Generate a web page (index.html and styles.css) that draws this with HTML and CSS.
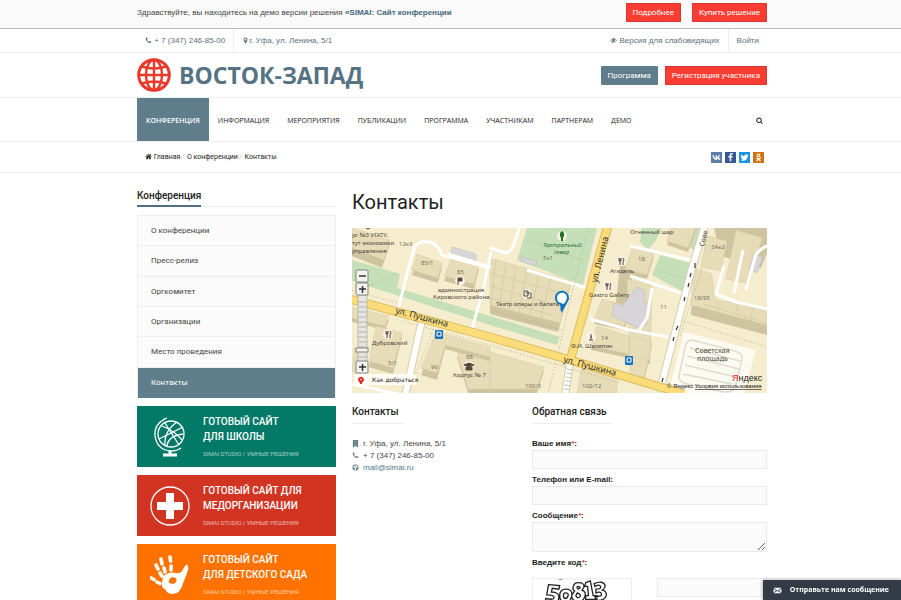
FILE: index.html
```html
<!DOCTYPE html>
<html lang="ru">

	<head>
		<meta charset="UTF-8">
		<title>Контакты</title>
		<link rel="stylesheet" href="styles.css">
	</head>

	<body>
		<!-- иконки -->
		<svg class="sprite" aria-hidden="true">
			<symbol id="i-phone" viewBox="0 0 1792 1792"><path d="M1600 1240q0 27-10 70.5t-21 68.5q-21 50-122 106-94 51-186 51-27 0-53-3.5t-57.5-12.5-47-14.5-55.5-20.5-49-18q-98-35-175-83-127-79-264-216t-216-264q-48-77-83-175-3-9-18-49t-20.5-55.5-14.5-47-12.5-57.5-3.5-53q0-92 51-186 56-101 106-122 25-11 68.5-21t70.5-10q14 0 21 3 18 6 53 76 11 19 30 54t35 63.5 31 53.5q3 4 17.5 25t21.5 35.5 7 28.5q0 20-28.5 50t-62 55-62 53-28.5 46q0 9 5 22.5t8.5 20.5 14 24 11.5 19q76 137 174 235t235 174q2 1 19 11.5t24 14 20.5 8.5 22.5 5q18 0 46-28.5t53-62 55-62 50-28.5q14 0 28.5 7t35.5 21.5 25 17.5q25 15 53.5 31t63.5 35 54 30q70 35 76 53 3 7 3 21z"/></symbol>
			<symbol id="i-marker" viewBox="0 0 1792 1792"><path d="M1152 640q0-106-75-181t-181-75-181 75-75 181 75 181 181 75 181-75 75-181zm256 0q0 109-33 179l-364 774q-16 33-47.5 52t-67.5 19-67.5-19-46.5-52l-365-774q-33-70-33-179 0-212 150-362t362-150 362 150 150 362z"/></symbol>
			<symbol id="i-search" viewBox="0 0 1792 1792"><path d="M1216 832q0-185-131.5-316.5t-316.5-131.5-316.5 131.5-131.5 316.5 131.5 316.5 316.5 131.5 316.5-131.5 131.5-316.5zm512 832q0 52-38 90t-90 38q-54 0-90-38l-343-342q-179 124-399 124-143 0-273.5-55.5t-225-150-150-225-55.5-273.5 55.5-273.5 150-225 225-150 273.5-55.5 273.5 55.5 225 150 150 225 55.5 273.5q0 220-124 399l343 343q37 37 37 90z"/></symbol>
			<symbol id="i-twitter" viewBox="0 0 1792 1792"><path d="M1684 408q-67 98-162 167 1 14 1 42 0 130-38 259.5t-115.5 248.5-184.5 210.5-258 146-323 54.5q-271 0-496-145 35 4 78 4 225 0 401-138-105-2-188-64.5t-114-159.5q33 5 61 5 43 0 85-11-112-23-185.5-111.5t-73.5-205.5v-4q68 38 146 41-66-44-105-115t-39-154q0-88 44-163 121 149 294.5 238.5t371.5 99.5q-8-38-8-74 0-134 94.5-228.5t228.5-94.5q140 0 236 102 109-21 205-78-37 115-142 178 93-10 186-50z"/></symbol>
			<symbol id="i-facebook" viewBox="0 0 1792 1792"><path d="M1343 12v264h-157q-86 0-116 36t-30 108v189h293l-39 296h-254v759h-306v-759h-255v-296h255v-218q0-186 104-288.5t277-102.5q147 0 228 12z"/></symbol>
			<symbol id="i-home" viewBox="0 0 16 16"><path d="M8 1.500.500 8l1 1L8 3.500 14.500 9l1-1-2.500-2.200V2h-2v2zM8 4.800 3 9v5h4v-4h2v4h4V9z"/></symbol>
			<symbol id="i-building" viewBox="0 0 16 16"><path fill-rule="evenodd" d="M2 0h12v16h-4v-3H6v3H2zM5 3v1h1V3zm2.500 0v1h1V3zm2.500 0v1h1V3zM5 6v1h1V6zm2.500 0v1h1V6zm2.500 0v1h1V6zM5 9v1h1V9zm2.500 0v1h1V9zm2.500 0v1h1V9z"/></symbol>
			<symbol id="i-globe" viewBox="0 0 16 16"><path fill-rule="evenodd" d="M8 1a7 7 0 1 0 0 14A7 7 0 0 0 8 1zM9 3l3 1 1 3-2 2-3-2-1 2 3 1-1 3-2 1-1-4-3-3 2-3 3 1z"/></symbol>
			<symbol id="i-eye" viewBox="0 0 16 16"><path d="M1 8q3-4.500 7-4.500T15 8q-3 4.500-7 4.500T1 8z" fill="none" stroke="currentColor" stroke-width="1.500"/><circle cx="8" cy="7.500" r="3"/><path d="M5 14 11 2" stroke="currentColor" stroke-width="1.500"/></symbol>
			<symbol id="i-vk" viewBox="0 0 16 16"><path d="M8.500 12.500C3.800 12.500 1.300 9.400.800 4h2.600c.200 3.200 1.600 5.200 3 5.600V4h2.400v3.300c1.400-.200 2.600-1.700 3-3.300h2.500c-.400 1.900-1.600 3.300-2.700 4 1.100.600 2.500 1.900 3.300 4.500h-2.700c-.500-1.500-1.800-2.700-3.400-2.900v2.900z"/></symbol>
			<symbol id="i-ok" viewBox="0 0 16 16"><g fill="none" stroke="currentColor" stroke-width="2" stroke-linecap="round"><circle cx="8" cy="4.200" r="2.400"/><path d="M4.500 8.800q3.500 2.400 7 0M8 10.500 5 14M8 10.500l3 3.500"/></g></symbol>
			<symbol id="i-mail" viewBox="0 0 16 16"><path d="M1 3h14L8 8.500zM1 4.800l4.300 3.400L1 12zM15 4.800l-4.300 3.400L15 12zM1.500 13l5-4.200L8 10l1.500-1.200 5 4.200z"/></symbol>
		</svg>

		<div class="demo">
			<div class="container demo-row">
				<p>Здравствуйте, вы находитесь на демо версии решения <a href="#">«SIMAI: Сайт конференции</a></p>
				<div class="demo-btns">
					<button class="btn btn-red" type="button">Подробнее</button>
					<button class="btn btn-red" type="button">Купить решение</button>
				</div>
			</div>
		</div>

		<div class="topbar">
			<div class="container topbar-row">
				<a href="#"><svg class="icon"><use href="#i-phone"/></svg> + 7 (347) 246-85-00</a>
				<a href="#"><svg class="icon"><use href="#i-marker"/></svg>г. Уфа, ул. Ленина, 5/1</a>
				<a class="to-right" href="#"><svg class="icon"><use href="#i-eye"/></svg> Версия для слабовидящих</a>
				<a href="#">Войти</a>
			</div>
		</div>

		<header class="header">
			<div class="container header-row">
				<a class="logo" href="#">
					<svg class="logo-pic" viewBox="0 0 34 34" fill="none" stroke="#e8392b" stroke-width="2.400">
						<circle cx="17" cy="17" r="15.300" stroke-width="3"/>
						<ellipse cx="17" cy="17" rx="8" ry="15"/>
						<path d="M17 2v30M2 17h30M5 8.500q12 4 24 0M5 25.500q12-4 24 0"/>
					</svg>
					<span>ВОСТОК-ЗАПАД</span>
				</a>
				<div class="header-btns">
					<button class="btn" type="button">Программа</button>
					<button class="btn btn-red" type="button">Регистрация участника</button>
				</div>
			</div>
		</header>

		<nav class="nav">
			<div class="container nav-row">
				<a class="active" href="#">КОНФЕРЕНЦИЯ</a>
				<a href="#">ИНФОРМАЦИЯ</a>
				<a href="#">МЕРОПРИЯТИЯ</a>
				<a href="#">ПУБЛИКАЦИИ</a>
				<a href="#">ПРОГРАММА</a>
				<a href="#">УЧАСТНИКАМ</a>
				<a href="#">ПАРТНЕРАМ</a>
				<a href="#">ДЕМО</a>
				<button class="search" type="button" aria-label="Поиск"><svg class="icon"><use href="#i-search"/></svg></button>
			</div>
		</nav>

		<div class="crumbs">
			<div class="container crumbs-row">
				<div class="crumbs-list">
					<a href="#"><svg class="icon"><use href="#i-home"/></svg> Главная</a><i>/</i>
					<a href="#">О конференции</a><i>/</i>
					<a href="#">Контакты</a>
				</div>
				<div class="social">
					<a class="vk" href="#" aria-label="ВКонтакте"><svg><use href="#i-vk"/></svg></a>
					<a class="fb" href="#" aria-label="Facebook"><svg><use href="#i-facebook"/></svg></a>
					<a class="tw" href="#" aria-label="Twitter"><svg><use href="#i-twitter"/></svg></a>
					<a class="ok" href="#" aria-label="Одноклассники"><svg><use href="#i-ok"/></svg></a>
				</div>
			</div>
		</div>

		<div class="container main">
			<aside class="side">
				<div class="side-title"><h2>Конференция</h2></div>
				<ul class="side-menu">
					<li><a href="#">О конференции</a></li>
					<li><a href="#">Пресс-релиз</a></li>
					<li><a href="#">Оргкомитет</a></li>
					<li><a href="#">Организации</a></li>
					<li><a href="#">Место проведения</a></li>
					<li class="active"><a href="#">Контакты</a></li>
				</ul>

				<a class="banner green" href="#">
					<svg viewBox="0 0 40 40" fill="none" stroke="#fff" stroke-width="1.300">
						<circle cx="21" cy="17" r="13"/>
						<path d="M15 2Q4 7 5 19q2 14 16 15 6 0 10-3M13 2.500l4-1.500M9 22l24-12M12 9q13 5 20 14M15 28q-1-14 12-23M17 29q1-10 16-12M15 6l14 22"/>
						<path d="M20 34v4M13 38h14" stroke-width="3"/>
					</svg>
					<span class="banner-text"><b>ГОТОВЫЙ САЙТ<br>ДЛЯ ШКОЛЫ</b><small>SIMAI.STUDIO / УМНЫЕ РЕШЕНИЯ</small></span>
				</a>
				<a class="banner red" href="#">
					<svg viewBox="0 0 40 40" fill="#fff">
						<circle cx="20" cy="20" r="19" fill="none" stroke="#fff" stroke-width="1.300"/>
						<path d="M16 7h8v9h9v8h-9v9h-8v-9H7v-8h9z"/>
					</svg>
					<span class="banner-text"><b>ГОТОВЫЙ САЙТ ДЛЯ<br>МЕДОРГАНИЗАЦИИ</b><small>SIMAI.STUDIO / УМНЫЕ РЕШЕНИЯ</small></span>
				</a>
				<a class="banner orange" href="#">
					<svg viewBox="0 0 40 40" fill="#fff">
						<path fill-rule="evenodd" d="M13 22q5-6 13-4 4 1 6-2l3-5q2-3 3 0 1 3-1 7-3 8-5 13-2 7-9 8-6 0-8-5-3-1-3-4 0-3 1-8zM22 22q-4 2-3 6l4 1q5-2 3-6z"/>
						<g stroke="#fff" stroke-linecap="round" stroke-width="3.600">
							<path d="M1 23l3 1.500M7 27l3 1.500M6 10l2 4M10 18l2 3M11 4l1 5M14 13l1 4M20 2l.500 4M21 11v4"/>
						</g>
					</svg>
					<span class="banner-text"><b>ГОТОВЫЙ САЙТ<br>ДЛЯ ДЕТСКОГО САДА</b><small>SIMAI.STUDIO / УМНЫЕ РЕШЕНИЯ</small></span>
				</a>
			</aside>

			<main class="content">
				<h1>Контакты</h1>

				<svg class="map" viewBox="0 0 415 165" preserveAspectRatio="xMidYMid slice">
					<rect width="415" height="165" fill="#f5edcd"/>
					<!-- скверы -->
					<g fill="#c5dfb8">
						<path d="M0 32l48 14-3 14 93 28 70 21-3 8-67-20L0 53z"/>
						<path d="M175 0h70l-14 57-66-25zM308 27l30 8-7 29-31-17zM341 0h10l-7 22-6-2zM290 0h20l-6 12-8 10-8-8zM278 42l13 5-4 6-9-3z"/>
					</g>
					<!-- дома -->
					<g fill="#cfc4a0">
						<path d="M0 2l38 14-8 24L0 28zM65 30l25 9-4 16-26-8zM100 34l27 7-5 20-30-8zM0 83l37 9-4 10-33-8zM24 102l26 7-9 37-24-7zM84 108l54 15v10l-45-12-8 31-16-5zM105 129l33 8v28h-22zM138 37l80 23-12 44-68-18zM280 24l22 5-7 22-22-6zM320 0h25l-9 24-21-7zM250 75l30 8-8 19-30-6zM245 102l32 10v18l-38-8zM275 55l25 6-2 75-20-5zM342 45l18 6 3 26 24 3 28 8v19l-76-20zM362 0h55v20l-8 20-40-12zM138 128l54 15-7 22h-47zM230 142l35 10v13h-40zM268 38h15l-10 47-10-2zM278 112l22 6-8 36-14-3z"/>
					</g>
					<g fill="#e6dcb7" stroke="#d8cca5" stroke-width=".5">
						<path d="M0 0l38 12-6 20L0 20zM65 26l25 9-4 15-26-8zM100 29l27 7-5 20-30-8zM0 79l37 9-4 10-33-8zM24 98l26 7-9 35-24-7zM84 104l54 15v10l-45-12-8 28-16-5zM105 125l33 8v28h-22zM138 30l82 23-12 42-70-18zM280 20l22 5-7 22-22-6zM320-4h25l-9 24-21-7zM250 71l30 8-8 19-30-6zM245 98l32 10v18l-38-8zM275 51l25 6-2 75-20-5zM342 40l18 6 3 26 24 3 28 8v14l-76-20zM355 8l20 5-6 30-20-4zM384 2l26 8-13 46-23-5zM138 124l54 15-7 22h-47zM230 138l35 10v17h-40zM2 120l10 3-4 23-8-2zM278 108l22 6-8 36-14-3z"/>
					</g>
					<path d="M144 31l-5 44M154 35l-7 44M164 39l-7 43M175 41l-8 43M187 45l-9 42M199 48l-10 42M138 45l75 21M138 58l70 20M138 70l66 18M351 76l64 19M365 70l3 23M385 76l2 21M401 79l-3 20" stroke="#d3c7a1" stroke-width=".7" fill="none"/>
					<g fill="#d8d5d8" stroke="#b9b6bf" stroke-width=".5">
						<path d="M100 19l24 7v8l-25-8zM169 29l16 4-1 5-16-5zM285 59l8 4-1 11 6 2-4 21-8 3-16-8-10-4 2-13 8 3zM402 26l9 3-6 16-8-4z"/>
					</g>
					<!-- площадь -->
					<path d="M332 104l72 18-12 43h-76z" fill="#fdfbf1"/>
					<g fill="none" stroke="#dedbd0" stroke-width="1.500">
						<path d="M340 112q-6 0-7 8l-6 28q-1 6 8 8l37 8q10 1 12-8l6-25q1-5-7-8zM338 120l50 13M335 128l52 13M333 137l51 12M331 146l49 10"/>
					</g>
					<!-- проезды -->
					<g fill="none" stroke="#fff" stroke-width="3" stroke-linejoin="round">
						<path d="M46 82l10-40 7-24q6-6 15-4 8 2 12 13l48 13M139 24l-7 34-12 43M96 26l43 13M138 20l16 5q6-2 8-9l6-18M175 42l63 19M278 48l60 20M278 18l65 15M372 38l-8 28 20 8 31 7M391 22l-9 43M415 18q-12 5-13 15l-8 29M300 60l-5 30-8 12M238 91l40 11 38 7M0 156l54 12"/>
					</g>
					<g fill="none" stroke="#b6ae86" stroke-width=".7" stroke-dasharray="1.500 2">
						<path d="M0 62l45 13M44 46L10 61M45 80l-30-4M80 105l-24 60M205 130l13-57 20-80M225 122l20-75 15-46M204 135l-8 30M325 91l90 28M320 108l-15 57M350 40l-22 68M50 93l88 24 130 38M175 12l55 20M305 42l30 9M140 82l70 20"/>
					</g>
					<!-- улицы -->
					<g fill="none" stroke-linejoin="round">
						<path d="M70 92l-17 76M218 134l-5 34M353-3l-13 43-31 118" stroke="#d6ceb0" stroke-width="8"/>
						<path d="M70 92l-17 76M218 134l-5 34M353-3l-13 43-31 118" stroke="#fff" stroke-width="6"/>
						<path d="M256-3l-38 136M-2 71l140 38 80 23 60 18 54 16" stroke="#d9bd5f" stroke-width="9"/>
						<path d="M256-3l-38 136M-2 71l140 38 80 23 60 18 54 16" stroke="#fbdc79" stroke-width="7"/>
						<path d="M218 141l-4 24" stroke="#c8c1ae" stroke-width="6" stroke-dasharray="1 3"/>
						<path d="M343 35v5M339 45l-1 4M337 55l-1 4M333 69l-1 4M326 98l-2 4M322 109l-1 4M311 150l-1 4" stroke="#333" stroke-width="1.200"/>
					</g>
					<!-- метки -->
					<g fill="#f7f2e6">
						<circle cx="108" cy="53" r="5"/><circle cx="36" cy="106" r="5"/><circle cx="117" cy="138" r="5"/><circle cx="175" cy="66" r="5"/><circle cx="210" cy="8" r="5"/><circle cx="269" cy="33" r="5"/><circle cx="256" cy="58" r="5"/><circle cx="239" cy="109" r="5"/>
					</g>
					<g fill="none" stroke="#5b463c" stroke-width="1">
						<path d="M34 103v3h2v-3M35 103v7M38 103q2 2 0 4v3M267 30v3h2v-3M268 30v7M271 30q2 2 0 4v3M254 55v3h2v-3M255 55v7M258 55q2 2 0 4v3M172 63h4v5h-4zM174 65h5v5h-4"/>
						<path d="M106 57v-7h4v3h-4M112 137l5-2 5 2-5 2zM114 139v3h6v-3M237 112h4M239 106v6M238 109h2" fill="#5b463c"/>
						<path d="M14 0q2 2 4 0"/>
					</g>
					<path d="M210 3a3 4 0 0 0-1 7v3h2v-3a3 4 0 0 0-1-7z" fill="#24721f"/>
					<g class="bus"><rect x="83" y="102" width="8" height="9" rx="1"/><rect x="273" y="128" width="8" height="9" rx="1"/><path d="M85 104h4v4h-4zM275 130h4v4h-4z" fill="none" stroke="#fff"/></g>
					<path d="M204 70a6 6 0 1 1 11 3l-5 9-1-6a6 6 0 0 1-5-6z" fill="#fff" stroke="#0c72c6" stroke-width="2"/>
					<path d="M208 83l6-8-4 1z" fill="#0c72c6"/>
					<!-- подписи -->
					<g class="map-text">
						<text x="0" y="9">ус №3 УГАТУ,</text><text x="0" y="17">тут экономики</text><text x="0" y="25">управления</text>
						<text class="num" x="47" y="18">12к3</text><text class="num" x="69" y="37">85/1</text><text class="num" x="105" y="46">85</text>
						<text x="86" y="64">администрация</text><text x="81" y="71">Кировского района</text>
						<text x="20" y="117">Дубровский</text><text x="101" y="149">Корпус № 7</text><text class="num" x="114" y="131">98</text><text class="num" x="79" y="141">96</text><text class="num" x="36" y="137">5/1</text>
						<text class="park" x="191" y="19">Театральный</text><text class="park" x="202" y="26">сквер</text><text class="num" x="191" y="32">5к1</text>
						<text x="144" y="78">Театр оперы и балета</text><text x="237" y="69">Gastro Gallery</text><text x="258" y="45">Агидель</text><text x="219" y="120">Ф.И. Шаляпин</text>
						<text class="num" x="249" y="112">14</text><text class="num" x="173" y="160">100/3</text><text class="num" x="230" y="160">102/12</text><text class="num" x="286" y="33">18</text><text class="num" x="308" y="81">11</text><text class="num" x="342" y="72">18/95</text><text class="num" x="359" y="21">3Ак2</text>
						<text x="278" y="6">Огненный шар</text><text class="area" x="343" y="125">Советская</text><text class="area" x="345" y="133">площадь</text>
						<text class="street" transform="translate(43 85) rotate(15)">ул. Пушкина</text>
						<text class="street" transform="translate(211 134) rotate(15)">ул. Пушкина</text>
						<text class="street" transform="translate(245 55) rotate(-76)">ул. Ленина</text>
						<text class="area" transform="translate(352 19) rotate(-76)">Сове</text>
					</g>
					<!-- масштаб -->
					<rect x="6" y="67" width="9" height="67" fill="#e6e5df" stroke="#aaa" stroke-width=".7"/>
					<path d="M6 74h9M6 79h9M6 84h9M6 89h9M6 94h9M6 99h9M6 104h9M6 109h9M6 114h9M6 119h9M6 129h9" stroke="#b5b4ae"/>
					<g fill="#f2f2ef" stroke="#84847e"><rect x="4" y="42" width="12" height="12" rx="1"/><rect x="4" y="55" width="12" height="12" rx="1"/><rect x="4" y="133" width="12" height="12" rx="1"/><rect x="4" y="120" width="12" height="4"/></g>
					<path d="M7 48h7M7 61h7M10.500 58v7M7 139h7M10.500 136v7" stroke="#333" stroke-width="1.500"/>
					<rect x="2" y="146" width="62" height="11" rx="2" fill="#fffdf4"/>
					<path d="M9 156q0-3-2-4a2 2 0 1 1 4 0q-2 1-2 4z" fill="#fff" stroke="#e1282d" stroke-width="2"/>
					<g class="map-text"><text class="route" x="20" y="154">Как добраться</text><text class="ya" x="380" y="153"><tspan fill="#e22">Я</tspan>ндекс</text><text class="copy" x="315" y="160">© Яндекс <tspan x="343" text-decoration="underline">Условия использования</tspan></text></g>
				</svg>

				<div class="cols">
					<section class="contacts">
						<h3>Контакты</h3>
						<ul>
							<li><svg class="icon"><use href="#i-building"/></svg>г. Уфа, ул. Ленина, 5/1</li>
							<li><svg class="icon"><use href="#i-phone"/></svg>+ 7 (347) 246-85-00</li>
							<li><svg class="icon"><use href="#i-globe"/></svg><a href="#">mail@simai.ru</a></li>
						</ul>
					</section>
					<section class="feedback">
						<h3>Обратная связь</h3>
						<form>
							<label for="name">Ваше имя<em>*</em>:</label>
							<input id="name" type="text">
							<label for="phone">Телефон или E-mail:</label>
							<input id="phone" type="text">
							<label for="msg">Сообщение<em>*</em>:</label>
							<textarea id="msg"></textarea>
							<label for="code">Введите код<em>*</em>:</label>
							<div class="captcha">
								<svg viewBox="0 0 100 28" role="img" aria-label="50813">
									<path d="M14 6l12 1-1 4-7-1-1 4q9 0 8 7-1 5-8 6l-7-2 1-4q9 2 9-1t-8-3zM33 11q7 0 6 7t-7 7-6-7 7-7zm-1 4q-2 0-2 3t2 3 3-3-3-3zM46 4q7 0 6 5l-2 3q5 2 3 7-2 6-8 5-7-1-6-7l3-4q-3-2-1-6 1-3 5-3zm0 4q-2 0-1 2 2 2 3-1l-2-1zm-1 7q-3 3 0 5 4 0 3-3zM54 4l5-2 3 16h4v4H54v-4h3l-1-10h-3zM63 5q10-4 12 2 0 3-3 5 5 1 4 6-2 6-11 5l-1-4q8 0 7-3t-6-1v-4q6 0 5-3t-6 0z" fill="#fff" stroke="#222" stroke-width="1.400"/>
									<path d="M25 0h4" stroke="#222"/>
								</svg>
								<input id="code" type="text">
							</div>
						</form>
					</section>
				</div>
			</main>
		</div>

		<button class="chat" type="button"><svg class="icon"><use href="#i-mail"/></svg>Отправьте нам сообщение</button>
	</body>

</html>
```
FILE: styles.css
```css
* {
	margin: 0px;
	padding: 0px;
	box-sizing: border-box;
}
html {
	height: 100%;
	overflow: hidden;
}
body {
	height: 100%;
	overflow: hidden;
	background: #fff;
	color: #444;
	font: 8px/12px "Liberation Sans", Arial, sans-serif;
}
ul {
	list-style: none;
}
a {
	color: inherit;
	text-decoration: none;
}
button {
	border: 0;
	background: none;
	cursor: pointer;
}
.sprite {
	display: none;
}
.icon {
	width: 7px;
	height: 7px;
	fill: currentColor;
	vertical-align: -1px;
}
.container {
	max-width: 633px;
	margin: 0 auto;
	padding-left: 3px;
}

/* кнопки */
.btn {
	height: 19px;
	padding: 0 7px;
	border-radius: 1px;
	background: #607d8b;
	color: #fff;
	font: 400 8px/19px Roboto, sans-serif;
}
.btn-red {
	background: #f93d32;
	box-shadow: inset 0 0 0 1px #e0352b;
}

/* демо панель */
.demo {
	background: #fafafa;
	border-bottom: 1px solid #bbb;
}
.demo-row {
	display: flex;
	align-items: center;
	justify-content: space-between;
	height: 28px;
	padding-bottom: 3px;
}
.demo a {
	color: #46687a;
	font-weight: bold;
}
.demo-btns {
	display: flex;
	gap: 11px;
}

/* верхняя строка */
.topbar {
	border-bottom: 1px solid #eee;
	color: #58707c;
}
.topbar-row {
	display: flex;
	line-height: 23px;
}
.topbar a {
	padding: 0 8px;
}
.topbar a + a {
	border-left: 1px solid #eee;
}
.topbar .to-right {
	margin-left: auto;
	border-left: 0;
}

/* шапка */
.header {
	border-bottom: 1px solid #eee;
}
.header-row {
	display: flex;
	align-items: center;
	justify-content: space-between;
	height: 44px;
}
.logo {
	display: flex;
	align-items: center;
	gap: 8px;
	color: #567383;
	font: bold 23px/34px "Open Sans", sans-serif;
}
.logo-pic {
	width: 34px;
	height: 34px;
}
.header-btns {
	display: flex;
	gap: 7px;
}

/* меню */
.nav {
	border-bottom: 1px solid #eee;
}
.nav-row {
	display: flex;
	font: 7px/43px "Open Sans", sans-serif;
	color: #222;
}
.nav a {
	padding: 1px 9px 0;
	height: 43px;
}
.nav .active {
	background: #607d8b;
	color: #fff;
	font-weight: 600;
}
.search {
	display: flex;
	align-items: center;
	margin-left: auto;
	padding: 1px 4px 0;
	color: #222;
}

/* крошки */
.crumbs {
	border-bottom: 1px solid #f3f3f3;
}
.crumbs-row {
	display: flex;
	align-items: center;
	justify-content: space-between;
	height: 30px;
}
.crumbs-list {
	padding-left: 8px;
	color: #222;
	font: 7px/12px Roboto, sans-serif;
}
.crumbs-list i {
	margin: 0 1px;
	color: #bbb;
}
.social {
	display: flex;
	gap: 3px;
	padding-right: 3px;
}
.social a {
	display: flex;
	align-items: center;
	justify-content: center;
	width: 11px;
	height: 11px;
	color: #fff;
}
.social svg {
	width: 9px;
	height: 9px;
	fill: currentColor;
}
.vk {
	background: #5b7fa6;
}
.fb {
	background: #3a5795;
}
.tw {
	background: #1b95e0;
}
.ok {
	background: #d2720f;
}

/* основная часть */
.main {
	display: grid;
	grid-template-columns: 199px 1fr;
	gap: 16px;
	padding-top: 16px;
}
.side-title {
	margin-bottom: 8px;
	border-bottom: 1px solid #eee;
}
.side-title h2 {
	display: inline-block;
	height: 18px;
	margin-bottom: -1px;
	border-bottom: 2px solid #4f7080;
	color: #222;
	font: 500 10px/14px Roboto, sans-serif;
	vertical-align: top;
}
.side-menu {
	display: flex;
	flex-direction: column;
	min-height: 183px;
	margin-bottom: 8px;
	border: 1px solid #eee;
	border-bottom: 0;
	background: #fbfbfb;
}
.side-menu li {
	flex: 1;
	border-bottom: 1px solid #eee;
	font: 8px/29px Roboto, sans-serif;
}
.side-menu a {
	display: block;
	padding-left: 13px;
}
.side-menu .active {
	border-color: #607d8b;
	background: #607d8b;
	color: #fff;
}
.banner {
	display: flex;
	align-items: center;
	gap: 13px;
	height: 61px;
	margin-bottom: 8px;
	padding-left: 13px;
	color: #fff;
}
.banner svg {
	width: 40px;
	height: 40px;
}
.banner b {
	display: block;
	font: 500 10px/15px Roboto, sans-serif;
}
.banner small {
	display: block;
	margin-top: 4px;
	font: 6px/12px Roboto, sans-serif;
	opacity: .6;
}
.green {
	background: #037a68;
}
.red {
	background: #d23422;
}
.orange {
	background: #ff7200;
}

/* контент */
.content h1 {
	margin-bottom: 13px;
	color: #222;
	font: 400 20px/26px Roboto, sans-serif;
}
.map {
	display: block;
	width: 100%;
	height: auto;
}
.map-text {
	fill: #4c4640;
	font: 6px "Noto Sans", sans-serif;
}
.map-text .num {
	fill: #77705c;
}
.map-text .park {
	fill: #2d6e3e;
	font-style: italic;
}
.map-text .street {
	fill: #333;
	font-size: 9px;
}
.map-text .area {
	font-size: 7px;
}
.map-text .route {
	fill: #111;
	font: 6px "DejaVu Sans", sans-serif;
}
.map-text .ya {
	fill: #222;
	font: 9px "Liberation Sans", sans-serif;
}
.map-text .copy {
	fill: #111;
	font: 6px "Liberation Sans", sans-serif;
}
.bus {
	fill: #1871bd;
}
.cols {
	display: grid;
	grid-template-columns: 164px 1fr;
	gap: 16px;
	padding-top: 12px;
}
.cols h3 {
	display: inline-block;
	height: 19px;
	margin-bottom: 14px;
	padding-right: 5px;
	border-bottom: 1px solid #eee;
	color: #222;
	font: 500 10px/14px Roboto, sans-serif;
	vertical-align: top;
}
.contacts .icon {
	margin-right: 4px;
	color: #607d8b;
}
.contacts a {
	color: #4f7a8a;
}
.feedback label {
	display: block;
	color: #222;
	font-weight: bold;
}
.feedback em {
	color: #e33;
}
.feedback input,
.feedback textarea {
	display: block;
	width: 100%;
	height: 19px;
	margin-bottom: 5px;
	padding: 0 4px;
	border: 1px solid #eaeaea;
	background: #fbfbfb;
	font: inherit;
}
.feedback textarea {
	height: 30px;
	resize: vertical;
}
.captcha {
	display: flex;
	justify-content: space-between;
	margin-top: 9px;
}
.captcha svg {
	width: 100px;
	height: 28px;
	border: 1px solid #eee;
}
.feedback .captcha input {
	width: 110px;
}
.chat {
	display: flex;
	align-items: center;
	gap: 8px;
	position: fixed;
	right: 0;
	bottom: 0;
	height: 20px;
	padding: 0 12px 0 10px;
	background: #333c46;
	box-shadow: 0 0 4px #999;
	color: #fff;
	font: bold 7px/20px "Open Sans", sans-serif;
}
.chat .icon {
	width: 9px;
	height: 9px;
}
```
